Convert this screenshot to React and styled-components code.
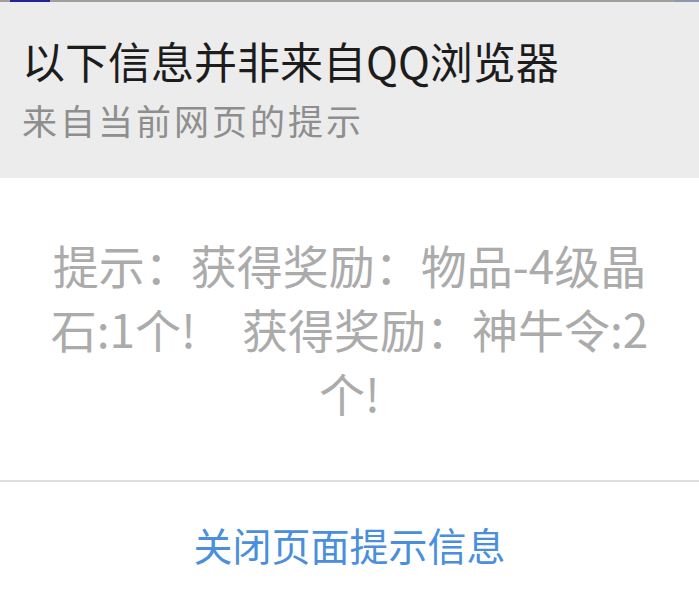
import React from "react";
import styled, { createGlobalStyle } from "styled-components";

const GlobalStyle = createGlobalStyle`
  html, body {
    margin: 0;
    padding: 0;
    background: #ffffff;
  }
  body {
    font-family: "Noto Sans CJK SC", "Noto Sans", sans-serif;
    overflow: hidden;
  }
`;

const Dialog = styled.div`
  width: 699px;
  display: flex;
  flex-direction: column;
  background: #ffffff;
`;

const TopEdge = styled.div`
  height: 2px;
  background: #a29e9a;
  display: flex;
  justify-content: space-between;
`;

const EdgeMark = styled.span`
  display: block;
  height: 2px;
  width: ${(p) => p.$w}px;
  margin-left: ${(p) => p.$left || 0}px;
  background: ${(p) => p.$color};
`;

const Header = styled.header`
  background: #ececec;
  padding: 33px 22px 36px;
  display: flex;
  flex-direction: column;
  gap: 12px;
`;

const Title = styled.h1`
  margin: 0;
  font-size: 43px;
  line-height: 51px;
  font-weight: 400;
  color: #1c1c1c;
`;

const Subtitle = styled.h2`
  margin: 0;
  font-size: 35px;
  line-height: 44px;
  font-weight: 400;
  letter-spacing: 3px;
  color: #8e8e8e;
`;

const Message = styled.p`
  margin: 0;
  padding: 54px 48px 56px;
  font-size: 46px;
  line-height: 64px;
  text-align: center;
  color: #ababab;
  border-bottom: 2px solid #dedede;
`;

const CloseButton = styled.button`
  height: 124px;
  border: none;
  background: transparent;
  font-family: inherit;
  font-size: 39px;
  color: #4a8fde;
  cursor: pointer;
`;

export default function App() {
  return (
    <>
      <GlobalStyle />
      <Dialog>
        <TopEdge>
          <EdgeMark $w={40} $left={10} $color="#23239a" />
          <EdgeMark $w={24} $color="#8d97ad" />
        </TopEdge>
        <Header>
          <Title>以下信息并非来自QQ浏览器</Title>
          <Subtitle>来自当前网页的提示</Subtitle>
        </Header>
        <Message>提示：获得奖励：物品-4级晶石:1个!　获得奖励：神牛令:2个!</Message>
        <CloseButton>关闭页面提示信息</CloseButton>
      </Dialog>
    </>
  );
}
